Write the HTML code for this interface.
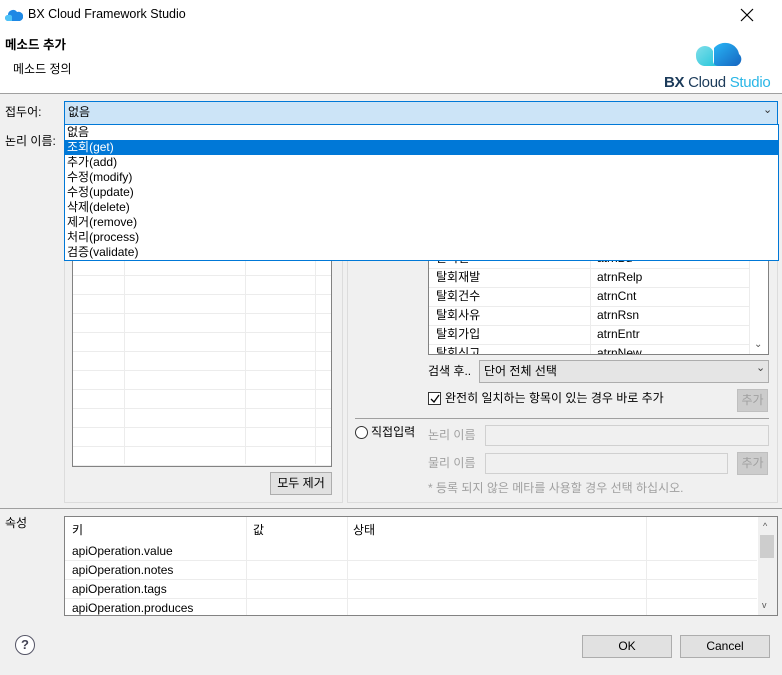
<!DOCTYPE html>
<html><head><meta charset="utf-8"><style>
*{box-sizing:border-box;margin:0;padding:0}
body{width:782px;height:675px;background:#f0f0f0;font-family:"Liberation Sans","Noto Sans CJK KR",sans-serif;font-size:12px;color:#000;position:relative;overflow:hidden}
.a{position:absolute}
.t{position:absolute;white-space:nowrap;line-height:15px}
.btn{position:absolute;background:#e1e1e1;border:1px solid #adadad;text-align:center;line-height:21px}
.dis{color:#a0a0a0;background:#ccc;border-color:#bfbfbf}
.inp{position:absolute;background:#f0f0f0;border:1px solid #d0d0d0}
.gray{color:#a0a0a0}
</style></head><body>
<div class="a" style="left:0;top:0;width:782px;height:94px;background:#fff"></div>
<svg class="a" style="left:5px;top:7px" width="18" height="16" viewBox="0 0 18 16"><path d="M3 14a3 3 0 0 1 0-6a5 5 0 0 1 9-3a4 4 0 0 1 3 9z" fill="#1e88e5"/><path d="M3 14a3 3 0 0 1 0-6a4 4 0 0 1 4 1v5z" fill="#4fc3f7"/></svg>
<div class="t" style="left:28px;top:7px;font-size:12.5px">BX Cloud Framework Studio</div>
<svg class="a" style="left:740px;top:8px" width="14" height="14"><path d="M1 1L13 13M13 1L1 13" stroke="#000" stroke-width="1.2"/></svg>
<div class="t" style="left:5px;top:38px;font-weight:bold;font-size:12.5px">메소드 추가</div>
<div class="t" style="left:13px;top:62px">메소드 정의</div>
<svg class="a" style="left:692px;top:34px" width="54" height="38" viewBox="0 0 54 38"><defs><linearGradient id="g1" x1="0" y1="0" x2="1" y2="1"><stop offset="0" stop-color="#29b6f6"/><stop offset="1" stop-color="#1565c0"/></linearGradient><linearGradient id="g2" x1="0" y1="0" x2="1" y2="1"><stop offset="0" stop-color="#80deea"/><stop offset="1" stop-color="#26c6da"/></linearGradient></defs><path d="M22 32V14a14 13 0 0 1 25 6a7 7 0 0 1-3 12z" fill="url(#g1)"/><path d="M12 32a9 10 0 0 1-8-10a9 9 0 0 1 17-5v10a5 5 0 0 0 5 5z" fill="url(#g2)"/></svg>
<div class="t" style="left:664px;top:75px;font-size:15px;font-weight:bold;color:#1c3b5a;letter-spacing:-0.3px">BX <span style="font-weight:normal;color:#1c3b5a">Cloud</span> <span style="font-weight:normal;color:#29b6e6">Studio</span></div>
<div class="a" style="left:0;top:93px;width:782px;height:1px;background:#a0a0a0"></div>

<div class="t" style="left:5px;top:105px">접두어:</div>
<div class="t" style="left:5px;top:134px">논리 이름:</div>

<!-- left group -->
<div class="a" style="left:64px;top:250px;width:279px;height:253px;border:1px solid #dcdcdc"></div>
<div class="a" style="left:72px;top:250px;width:260px;height:217px;background:#fff;border:1px solid #828282;border-top:none;background-image:repeating-linear-gradient(to bottom,transparent 0 18px,#ececec 18px 19px);background-position:0 7px"></div>
<div class="a" style="left:124px;top:250px;width:1px;height:214px;background:#ececec"></div>
<div class="a" style="left:245px;top:250px;width:1px;height:214px;background:#ececec"></div>
<div class="a" style="left:315px;top:250px;width:1px;height:214px;background:#ececec"></div>
<div class="btn" style="left:270px;top:472px;width:62px;height:23px">모두 제거</div>

<!-- right group -->
<div class="a" style="left:347px;top:250px;width:431px;height:253px;border:1px solid #dcdcdc"></div>
<div class="a" style="left:428px;top:250px;width:341px;height:105px;background:#fff;border:1px solid #828282;border-top:none;overflow:hidden">
<div class="t" style="left:7px;top:1px">탈회일</div><div class="t" style="left:168px;top:1px">atrnBd</div>
<div class="t" style="left:7px;top:96px">탈회신고</div><div class="t" style="left:168px;top:96px">atrnNew</div>
</div>
<div class="a" style="left:590px;top:250px;width:1px;height:104px;background:#ececec"></div>
<div class="a" style="left:749px;top:250px;width:1px;height:104px;background:#ececec"></div>
<div class="a" style="left:429px;top:268px;width:320px;height:1px;background:#ececec"></div>
<div class="a" style="left:429px;top:287px;width:320px;height:1px;background:#ececec"></div>
<div class="a" style="left:429px;top:306px;width:320px;height:1px;background:#ececec"></div>
<div class="a" style="left:429px;top:325px;width:320px;height:1px;background:#ececec"></div>
<div class="a" style="left:429px;top:344px;width:320px;height:1px;background:#ececec"></div>
<div class="t" style="left:436px;top:270px">탈회재발</div><div class="t" style="left:597px;top:270px">atrnRelp</div>
<div class="t" style="left:436px;top:289px">탈회건수</div><div class="t" style="left:597px;top:289px">atrnCnt</div>
<div class="t" style="left:436px;top:308px">탈회사유</div><div class="t" style="left:597px;top:308px">atrnRsn</div>
<div class="t" style="left:436px;top:327px">탈회가입</div><div class="t" style="left:597px;top:327px">atrnEntr</div>
<div class="t" style="left:754px;top:337px;font-size:10px;color:#555">⌄</div>
<div class="t" style="left:428px;top:364px">검색 후..</div>
<div class="a" style="left:479px;top:360px;width:290px;height:23px;background:#e5e5e5;border:1px solid #adadad"></div>
<div class="t" style="left:484px;top:364px">단어 전체 선택</div>
<div class="t" style="left:756px;top:361px;color:#444;font-size:11px">⌄</div>
<div class="a" style="left:428px;top:392px;width:13px;height:13px;background:#fff;border:1px solid #333"></div>
<svg class="a" style="left:430px;top:394px" width="10" height="10"><path d="M1 5L4 8L9 1" stroke="#000" stroke-width="1.3" fill="none"/></svg>
<div class="t" style="left:445px;top:391px">완전히 일치하는 항목이 있는 경우 바로 추가</div>
<div class="btn dis" style="left:737px;top:389px;width:31px;height:23px">추가</div>
<div class="a" style="left:355px;top:418px;width:414px;height:1px;background:#a0a0a0"></div>
<div class="a" style="left:355px;top:426px;width:13px;height:13px;border-radius:50%;background:#fff;border:1px solid #333"></div>
<div class="t" style="left:371px;top:425px">직접입력</div>
<div class="t gray" style="left:428px;top:428px">논리 이름</div>
<div class="inp" style="left:485px;top:425px;width:284px;height:21px"></div>
<div class="t gray" style="left:428px;top:456px">물리 이름</div>
<div class="inp" style="left:485px;top:453px;width:243px;height:21px"></div>
<div class="btn dis" style="left:737px;top:452px;width:31px;height:23px">추가</div>
<div class="t gray" style="left:428px;top:481px">* 등록 되지 않은 메타를 사용할 경우 선택 하십시오.</div>

<div class="a" style="left:0;top:508px;width:782px;height:1px;background:#a0a0a0"></div>
<div class="t" style="left:5px;top:516px">속성</div>
<div class="a" style="left:64px;top:516px;width:714px;height:100px;background:#fff;border:1px solid #828282"></div>
<div class="a" style="left:246px;top:517px;width:1px;height:98px;background:#ececec"></div>
<div class="a" style="left:347px;top:517px;width:1px;height:98px;background:#ececec"></div>
<div class="a" style="left:646px;top:517px;width:1px;height:98px;background:#ececec"></div>
<div class="a" style="left:65px;top:560px;width:692px;height:1px;background:#ececec"></div>
<div class="a" style="left:65px;top:579px;width:692px;height:1px;background:#ececec"></div>
<div class="a" style="left:65px;top:598px;width:692px;height:1px;background:#ececec"></div>
<div class="t" style="left:72px;top:523px">키</div><div class="t" style="left:253px;top:523px">값</div><div class="t" style="left:353px;top:523px">상태</div>
<div class="t" style="left:72px;top:544px">apiOperation.value</div>
<div class="t" style="left:72px;top:563px">apiOperation.notes</div>
<div class="t" style="left:72px;top:582px">apiOperation.tags</div>
<div class="t" style="left:72px;top:601px">apiOperation.produces</div>
<div class="a" style="left:758px;top:517px;width:19px;height:98px;background:#f0f0f0"></div>
<div class="a" style="left:760px;top:535px;width:14px;height:23px;background:#cdcdcd"></div>
<div class="t" style="left:763px;top:519px;font-size:9px;color:#555">^</div>
<div class="t" style="left:762px;top:598px;font-size:9px;color:#555">v</div>

<div class="a" style="left:15px;top:635px;width:20px;height:20px;border-radius:50%;border:1.5px solid #556;background:#fff;text-align:center;line-height:17px;font-weight:bold;color:#445;font-size:13px">?</div>
<div class="btn" style="left:582px;top:635px;width:90px;height:23px">OK</div>
<div class="btn" style="left:680px;top:635px;width:90px;height:23px">Cancel</div>

<!-- combo + dropdown on top -->
<div class="a" style="left:64px;top:101px;width:714px;height:24px;background:#cce4f7;border:1px solid #0078d7"></div>
<div class="t" style="left:68px;top:105px">없음</div>
<div class="t" style="left:763px;top:103px;font-size:11px;color:#333">⌄</div>
<div class="a" style="left:64px;top:124px;width:715px;height:137px;background:#fff;border:1px solid #0078d7"></div>
<div class="a" style="left:65px;top:140px;width:713px;height:15px;background:#0078d7"></div>
<div class="t" style="left:67px;top:125px">없음</div>
<div class="t" style="left:67px;top:140px;color:#fff">조회(get)</div>
<div class="t" style="left:67px;top:155px">추가(add)</div>
<div class="t" style="left:67px;top:170px">수정(modify)</div>
<div class="t" style="left:67px;top:185px">수정(update)</div>
<div class="t" style="left:67px;top:200px">삭제(delete)</div>
<div class="t" style="left:67px;top:215px">제거(remove)</div>
<div class="t" style="left:67px;top:230px">처리(process)</div>
<div class="t" style="left:67px;top:245px">검증(validate)</div>
</body></html>
